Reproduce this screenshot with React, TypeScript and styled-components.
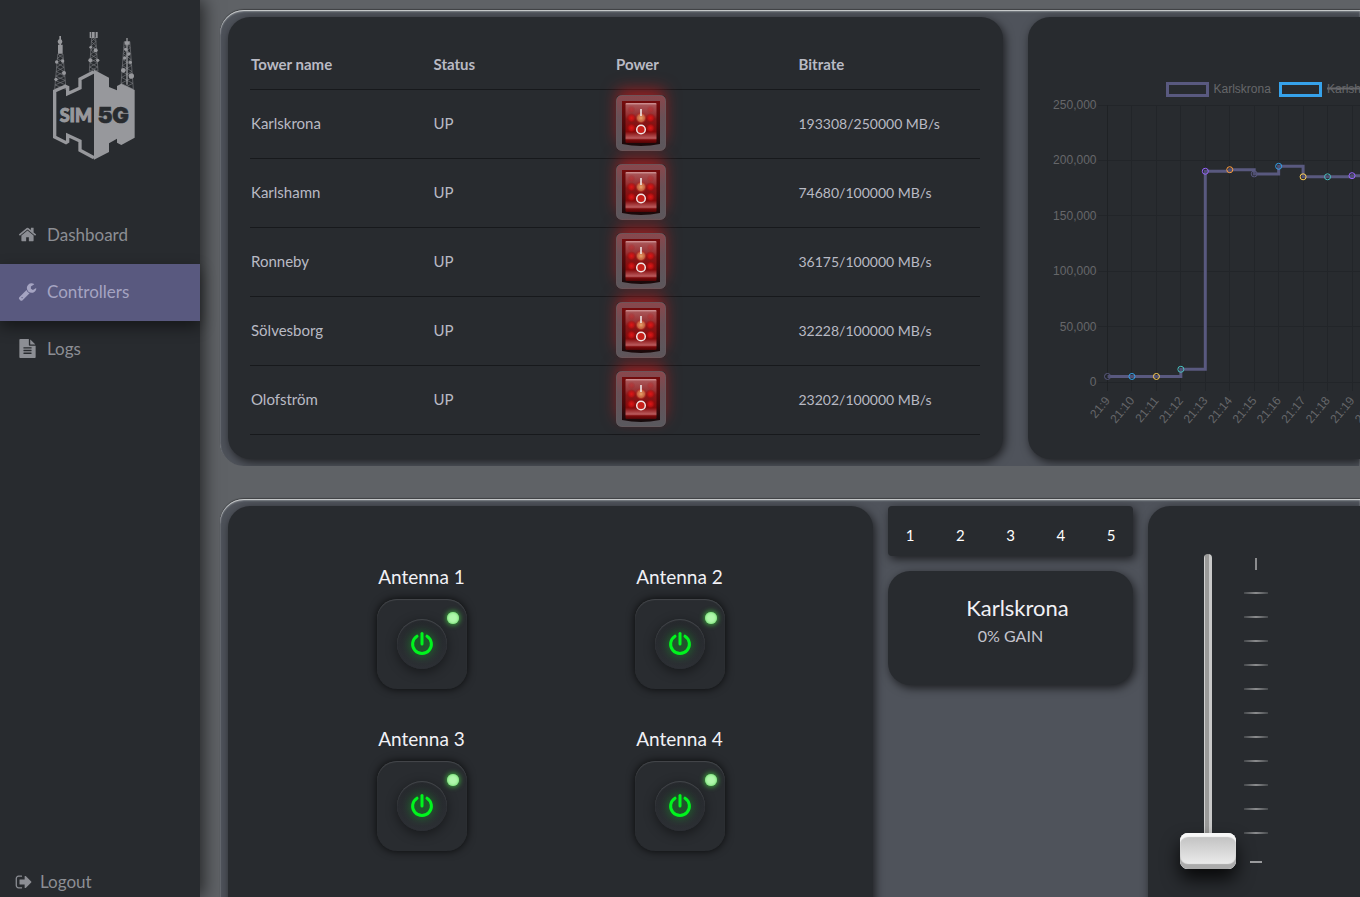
import React, { useState } from 'react';
import styled, { createGlobalStyle } from 'styled-components';

const GlobalStyle = createGlobalStyle`
  *, *::before, *::after { box-sizing: border-box; }
  body {
    margin: 0;
    background: #5f6266;
    color: #b9bac4;
    font-family: Lato, "Liberation Sans", sans-serif;
    font-size: 15px;
    overflow: hidden;
  }
  svg { display: block; }
  button { font: inherit; color: inherit; background: none; border: 0; padding: 0; cursor: pointer; }
`;

const Page = styled.div`
  display: flex;
  height: 100vh;
  overflow: hidden;
`;

const Sidebar = styled.aside`
  flex: 0 0 200px;
  display: flex;
  flex-direction: column;
  background: #282b2f;
  box-shadow: 4px 0 16px rgba(0, 0, 0, 0.6);
  z-index: 1;
`;

const Brand = styled.div`
  height: 207px;
  padding: 30px 50px 0;
`;

const NavLink = styled.a<{ $active?: boolean }>`
  display: flex;
  align-items: center;
  gap: 10px;
  height: 57px;
  padding: 0 18px 3px;
  font-size: 17px;
  text-decoration: none;
  color: ${(p) => (p.$active ? '#a5a4c2' : '#8c8e94')};
  background: ${(p) => (p.$active ? '#59597f' : 'transparent')};
  box-shadow: ${(p) => (p.$active ? '0 6px 14px rgba(0, 0, 0, 0.45)' : 'none')};
`;

const LogoutLink = styled.a`
  display: flex;
  align-items: center;
  gap: 7px;
  margin-top: auto;
  padding: 0 15px 4px;
  line-height: 22px;
  font-size: 17px;
  text-decoration: none;
  color: #8c8e94;
`;

const Main = styled.main`
  flex: 1;
  min-width: 0;
  display: flex;
  flex-direction: column;
  gap: 33px;
  padding: 10px 0 0 20px;
`;

const Panel = styled.section<{ $columns: string; $gap: number; $grow?: boolean }>`
  display: grid;
  grid-template-columns: ${(p) => p.$columns};
  gap: ${(p) => p.$gap}px;
  flex: ${(p) => (p.$grow ? '1 0 480px' : 'none')};
  padding: 7px 0 7px 8px;
  border-radius: 24px 0 0 24px;
  background: #4f535b;
  box-shadow: inset 0 1px 1px #d0d2d3, inset 0 2px 2px rgba(190, 195, 200, 0.35), 0 -1px 1px rgba(0, 0, 0, 0.35);
  overflow: hidden;
`;

const Card = styled.div<{ $small?: boolean }>`
  min-width: 0;
  border-radius: ${(p) => (p.$small ? '4px' : '22px')};
  background: #282b2f;
  box-shadow: 2px 3px 10px rgba(0, 0, 0, 0.65);
`;

const TableCard = styled(Card)`
  padding: 22px 23px 24px 22px;
`;

const EdgeCard = styled(Card)`
  border-radius: 22px 0 0 22px;
  overflow: hidden;
`;

const TowerTable = styled.table`
  width: 100%;
  table-layout: fixed;
  border-collapse: collapse;
`;

const HeadCell = styled.th`
  height: 50px;
  padding: 0 1px;
  text-align: left;
  font-weight: 700;
  border-bottom: 1px solid #17191c;
`;

const Cell = styled.td<{ $numeric?: boolean }>`
  height: 69px;
  padding: 0 1px 1px;
  font-size: ${(p) => (p.$numeric ? '14px' : '15px')};
  border-bottom: 1px solid #17191c;
`;

const SwitchLabel = styled.label`
  position: relative;
  display: block;
  width: 50px;
  height: 56px;
  border-radius: 5px;
  box-shadow: 0 -7px 16px -2px rgba(240, 20, 20, 0.6);
  cursor: pointer;
`;

const SwitchInput = styled.input`
  position: absolute;
  inset: 0;
  width: 100%;
  height: 100%;
  margin: 0;
  opacity: 0;
`;

const AntennaCard = styled(Card)`
  display: grid;
  grid-template-columns: 40% 40%;
  justify-content: center;
  align-content: start;
  row-gap: 35px;
  padding-top: 56px;
`;

const Antenna = styled.div`
  display: flex;
  flex-direction: column;
  align-items: center;
  gap: 7px;
`;

const AntennaName = styled.span`
  line-height: 30px;
  font-size: 19px;
  color: #f1f1f6;
`;

const PowerButton = styled.button`
  position: relative;
  display: grid;
  place-items: center;
  width: 90px;
  height: 90px;
  border-radius: 20px;
  background: #292c30;
  box-shadow: inset 0 1px 1px #45484c, 0 0 8px rgba(0, 0, 0, 0.8);
`;

const PowerKnob = styled.span`
  display: grid;
  place-items: center;
  width: 50px;
  height: 50px;
  border-radius: 50%;
  background: linear-gradient(#26292d, #2c2f34);
  box-shadow: inset 0 1px 1px #45484c, 0 3px 12px rgba(0, 0, 0, 0.45);
`;

const PowerIcon = styled.svg`
  width: 24px;
  height: 24px;
  overflow: visible;
  filter: drop-shadow(0 0 5px rgba(0, 255, 30, 0.6));
`;

const Led = styled.span<{ $on: boolean }>`
  position: absolute;
  top: 13px;
  right: 8px;
  width: 12px;
  height: 12px;
  border-radius: 50%;
  background: ${(p) => (p.$on ? '#b0f8ac' : '#44484c')};
  box-shadow: ${(p) => (p.$on ? '0 0 5px 1px #3ca83e, inset 0 0 3px #5fd35f' : 'none')};
`;

const SideColumn = styled.div`
  display: flex;
  flex-direction: column;
  gap: 15px;
`;

const Pager = styled(Card)`
  display: flex;
  justify-content: space-between;
  height: 50px;
  padding: 8px 16px 0;
  color: #ffffff;
`;

const PageButton = styled.button`
  width: 12px;
`;

const GainCard = styled(Card)`
  padding: 22px 0 36px;
  text-align: center;
`;

const GainTitle = styled.h2`
  margin: 0;
  padding-left: 14px;
  font-size: 22px;
  line-height: 30px;
  font-weight: 400;
  color: #f1f1f6;
`;

const GainValue = styled.p`
  margin: 0;
  font-size: 16px;
  line-height: 26px;
  color: #c4c5ce;
`;

const FaderCard = styled(EdgeCard)`
  display: flex;
  align-items: flex-start;
  gap: 8px;
  padding: 48px 0 0 32px;
`;

const Fader = styled.input`
  appearance: none;
  writing-mode: vertical-lr;
  direction: rtl;
  width: 56px;
  height: 315px;
  margin: 0;
  background: transparent;

  &::-webkit-slider-runnable-track {
    width: 8px;
    height: 315px;
    border-radius: 4px;
    background: linear-gradient(90deg, #d0d0d0 1px, #9a9a99 1px, #9a9a99 5px, #c9c9c9 5px);
  }

  &::-webkit-slider-thumb {
    appearance: none;
    width: 56px;
    height: 36px;
    margin-left: -24px;
    border-radius: 8px;
    background: linear-gradient(#bdbdbd, #f2f2f2);
    box-shadow: inset 0 5px 1px -1px #f7f7f7, inset 0 -5px 1px #ababab, inset 0 0 0 1px #dcdcdc, 0 10px 18px rgba(0, 0, 0, 0.8);
  }
`;

const Scale = styled.div`
  display: flex;
  flex-direction: column;
  align-items: center;
  width: 24px;
  padding-top: 4px;
`;

const ScaleTop = styled.span`
  width: 2px;
  height: 12px;
  margin-bottom: 22px;
  background: #8b8c8e;
`;

const ScaleTick = styled.span`
  width: 24px;
  height: 2px;
  margin-bottom: 22px;
  background: linear-gradient(90deg, #45484b, #8b8c8e 50%, #45484b);
`;

const ScaleBottom = styled.span`
  width: 12px;
  height: 2px;
  margin-top: 5px;
  background: #9a9b9d;
`;

const icons = {
  home: 'M1472 992v480q0 26-19 45t-45 19h-384v-384h-256v384h-384q-26 0-45-19t-19-45v-480q0-1 .5-3t.5-3l575-474 575 474q1 2 1 6zm223-69l-62 74q-8 9-21 11h-3q-13 0-21-7l-692-577-692 577q-12 8-24 7-13-2-21-11l-62-74q-8-10-7-23.5t11-21.5l719-599q32-26 76-26t76 26l244 204v-195q0-14 9-23t23-9h192q14 0 23 9t9 23v408l219 182q10 8 11 21.5t-7 23.5z',
  wrench: 'M448 1472q0-26-19-45t-45-19-45 19-19 45 19 45 45 19 45-19 19-45zm644-420l-682 682q-37 37-90 37-52 0-91-37l-106-108q-38-36-38-90 0-53 38-91l681-681q39 98 114.5 173.5t173.5 114.5zm634-435q0 39-23 106-47 134-164.5 217.5t-258.5 83.5q-185 0-316.5-131.5t-131.5-316.5 131.5-316.5 316.5-131.5q58 0 121.5 16.5t107.5 46.5q16 11 16 28t-16 28l-293 169v224l193 107q5-3 79-48.5t135.5-81 70.5-35.5q15 0 23.5 10t8.5 25z',
  file: 'M1596 476q14 14 28 36h-472v-472q22 14 36 28zm-476 164h544v1056q0 40-28 68t-68 28h-1344q-40 0-68-28t-28-68v-1600q0-40 28-68t68-28h800v544q0 40 28 68t68 28zm160 736v-64q0-14-9-23t-23-9h-704q-14 0-23 9t-9 23v64q0 14 9 23t23 9h704q14 0 23-9t9-23zm0-256v-64q0-14-9-23t-23-9h-704q-14 0-23 9t-9 23v64q0 14 9 23t23 9h704q14 0 23-9t9-23zm0-256v-64q0-14-9-23t-23-9h-704q-14 0-23 9t-9 23v64q0 14 9 23t23 9h704q14 0 23-9t9-23z',
  signOut: 'M704 1440q0 4 1 20t.5 26.5-3 23.5-10 19.5-20.5 6.5h-320q-119 0-203.5-84.5t-84.5-203.5v-704q0-119 84.5-203.5t203.5-84.5h320q13 0 22.5 9.5t9.5 22.5q0 4 1 20t.5 26.5-3 23.5-10 19.5-20.5 6.5h-320q-66 0-113 47t-47 113v704q0 66 47 113t113 47h312l11.5 1 11.5 3 8 5.5 7 9 2 13.5zm928-544q0 26-19 45l-544 544q-19 19-45 19t-45-19-19-45v-288h-448q-26 0-45-19t-19-45v-384q0-26 19-45t45-19h448v-288q0-26 19-45t45-19 45 19l544 544q19 19 19 45z',
};

function Icon({ name, size }: { name: keyof typeof icons; size: number }) {
  return (
    <svg width={size} height={size} viewBox="0 0 1792 1792" fill="currentColor" aria-hidden="true">
      <path d={icons[name]} />
    </svg>
  );
}

function Mast({ x, top, base, half }: { x: number; top: number; base: number; half: number }) {
  const steps = 8;
  const height = (base - top) / steps;
  const at = (i: number) => half * (0.45 + (0.55 * i) / steps);
  let d = `M${x - at(0)} ${top}L${x - half} ${base}M${x + at(0)} ${top}L${x + half} ${base}`;
  for (let i = 0; i < steps; i++) {
    const y = top + i * height;
    d += `M${x - at(i)} ${y}L${x + at(i + 1)} ${y + height}M${x + at(i)} ${y}L${x - at(i + 1)} ${y + height}`;
  }
  return <path d={d} fill="none" stroke="#77797d" strokeWidth="2" />;
}

function Logo() {
  return (
    <svg width="90" height="133" viewBox="150 90 270 399" role="img" aria-label="SIM 5G">
      <Mast x={181} top={162} base={268} half={17} />
      <Mast x={281} top={112} base={214} half={13} />
      <Mast x={381} top={125} base={268} half={19} />
      <g fill="#97989c">
        <path d="M178 108h5v26h5v27h-14v-27h4zM269 96h5v18h-5zM276 96h8v18h-8zM287 96h6v18h-6zM379 114h4v140h-4zM374 124h15v10h-15z" />
        <circle cx="180" cy="125" r="7" />
        <circle cx="170" cy="186" r="5" />
        <circle cx="188" cy="183" r="5" />
        <circle cx="192" cy="219" r="6" />
        <circle cx="168" cy="238" r="5" />
        <circle cx="287" cy="151" r="6" />
        <circle cx="271" cy="181" r="6" />
        <circle cx="293" cy="181" r="5" />
        <circle cx="272" cy="142" r="4" />
        <circle cx="377" cy="148" r="5" />
        <circle cx="386" cy="162" r="5" />
        <circle cx="374" cy="174" r="5" />
        <circle cx="391" cy="187" r="5" />
        <circle cx="370" cy="211" r="7" />
        <circle cx="394" cy="228" r="8" />
        <path d="M282 209L327 233V261L351 271V258L364 251L404 270V413L364 435L351 428V416L327 430V456L282 479Z" />
      </g>
      <path
        d="M282 215L240 237V264L203 281V262L196 259L164 273V411L198 428L203 425V406L240 423V451L282 473"
        fill="none"
        stroke="#97989c"
        strokeWidth="10"
      />
      <text x="179" y="367" fill="#97989c" stroke="#97989c" strokeWidth="3" fontFamily="Lato" fontWeight="900" fontSize="54">SIM</text>
      <text x="293" y="370" fill="#282b2f" stroke="#282b2f" strokeWidth="2" fontFamily="Inter" fontWeight="900" fontSize="66">5G</text>
    </svg>
  );
}

function RockerSwitch({ tower }: { tower: string }) {
  return (
    <SwitchLabel>
      <SwitchInput type="checkbox" defaultChecked aria-label={`${tower} power`} />
      <svg width="50" height="56" viewBox="0 0 50 56" aria-hidden="true">
        <defs>
          <linearGradient id="plate" x1="0" y1="0" x2="0" y2="1">
            <stop offset="0" stopColor="#8a474c" />
            <stop offset="0.4" stopColor="#695056" />
            <stop offset="1" stopColor="#59595e" />
          </linearGradient>
          <linearGradient id="well" x1="0" y1="0" x2="0" y2="1">
            <stop offset="0" stopColor="#750c0d" />
            <stop offset="0.6" stopColor="#4a090a" />
            <stop offset="1" stopColor="#140a0b" />
          </linearGradient>
          <linearGradient id="rocker" x1="0" y1="0" x2="0" y2="1">
            <stop offset="0" stopColor="#d39a9b" />
            <stop offset="0.06" stopColor="#a85355" />
            <stop offset="0.3" stopColor="#963032" />
            <stop offset="0.4" stopColor="#86191a" />
            <stop offset="0.72" stopColor="#840a0b" />
            <stop offset="0.88" stopColor="#bb5c5e" />
            <stop offset="0.92" stopColor="#7d0b0c" />
            <stop offset="1" stopColor="#4f0506" />
          </linearGradient>
          <radialGradient id="lamp">
            <stop offset="0" stopColor="#e01616" />
            <stop offset="0.5" stopColor="#c41213" stopOpacity="0.8" />
            <stop offset="1" stopColor="#a00000" stopOpacity="0" />
          </radialGradient>
          <radialGradient id="hotLamp">
            <stop offset="0" stopColor="#e8a468" />
            <stop offset="0.6" stopColor="#d4744a" stopOpacity="0.8" />
            <stop offset="1" stopColor="#b00000" stopOpacity="0" />
          </radialGradient>
        </defs>
        <rect x="0.5" y="0.5" width="49" height="55" rx="5" fill="url(#plate)" stroke="#857074" strokeOpacity="0.5" />
        <path d="M6 6H44V49Q25 53 6 49Z" fill="url(#well)" />
        <rect x="9.500" y="8" width="31" height="40" rx="1" fill="url(#rocker)" />
        {[15.5, 34.5].map((x) => (
          <g key={x} fill="url(#lamp)">
            <circle cx={x} cy="14.500" r="4" opacity="0.3" />
            <circle cx={x} cy="23" r="5" />
            <circle cx={x} cy="33" r="5" />
          </g>
        ))}
        <circle cx="25" cy="23" r="6" fill="url(#hotLamp)" />
        <circle cx="25" cy="34" r="4" fill="#c8201a" />
        <path d="M25 14V21" stroke="#eee6e6" strokeWidth="1.600" />
        <circle cx="25" cy="34.500" r="4.300" fill="none" stroke="#f1e6e6" strokeWidth="1.500" />
      </svg>
    </SwitchLabel>
  );
}

const times = ['21:9', '21:10', '21:11', '21:12', '21:13', '21:14', '21:15', '21:16', '21:17', '21:18', '21:19', '21:20'];
const values = [5000, 5000, 5000, 11500, 190200, 191600, 187800, 194700, 185200, 185200, 186200, 186200];
const dots = ['#59597f', '#36a2eb', '#ffce56', '#4bc0c0', '#9966ff', '#ff9f40', '#59597f', '#36a2eb', '#ffce56', '#4bc0c0', '#9966ff', '#ff9f40'];

function BitrateChart() {
  const xAt = (i: number) => 79.5 + i * 24.45;
  const yAt = (v: number) => 365 - (v * 277) / 250000;
  const line = values.reduce((d, v, i) => (i === 0 ? `M${xAt(0)} ${yAt(v)}` : `${d}H${xAt(i)}V${yAt(v)}`), '');
  return (
    <svg width="332" height="440" viewBox="0 0 332 440" fontFamily="Liberation Sans, sans-serif" fontSize="12" fill="#66676a">
      <g fill="none" strokeWidth="3">
        <rect x="139.500" y="66.500" width="40" height="12" stroke="#59597f" />
        <rect x="252.500" y="66.500" width="40" height="12" stroke="#36a2eb" />
      </g>
      <text x="185.500" y="76">Karlskrona</text>
      <text x="299" y="76">Karlshamn</text>
      <path d="M299 71.500H357" stroke="#66676a" strokeWidth="2" />
      {[0, 50000, 100000, 150000, 200000, 250000].map((v) => (
        <g key={v}>
          <path d={`M70 ${Math.floor(yAt(v)) + 0.5}H332`} stroke="#222529" />
          <text x="68.500" y={yAt(v) + 4} textAnchor="end">{v.toLocaleString('en-US')}</text>
        </g>
      ))}
      {times.map((t, i) => (
        <g key={t}>
          <path d={`M${Math.floor(xAt(i)) + 0.5} 88V374`} stroke={i === 0 ? '#1f2225' : '#222529'} />
          <text textAnchor="end" transform={`translate(${xAt(i) + 3} 384) rotate(-50)`}>{t}</text>
        </g>
      ))}
      <path d={line} fill="none" stroke="#59597f" strokeWidth="3" />
      {values.map((v, i) => (
        <circle key={i} cx={xAt(i)} cy={yAt(v)} r="3" fill="#000000" fillOpacity="0.1" stroke={dots[i]} />
      ))}
    </svg>
  );
}

const towers = [
  { name: 'Karlskrona', bitrate: '193308/250000 MB/s' },
  { name: 'Karlshamn', bitrate: '74680/100000 MB/s' },
  { name: 'Ronneby', bitrate: '36175/100000 MB/s' },
  { name: 'Sölvesborg', bitrate: '32228/100000 MB/s' },
  { name: 'Olofström', bitrate: '23202/100000 MB/s' },
];

function AntennaControl({ index }: { index: number }) {
  const [on, setOn] = useState(true);
  return (
    <Antenna>
      <AntennaName id={`antenna-${index}`}>Antenna {index}</AntennaName>
      <PowerButton type="button" aria-pressed={on} aria-labelledby={`antenna-${index}`} onClick={() => setOn(!on)}>
        <PowerKnob>
          <PowerIcon viewBox="0 0 24 24" fill="none" stroke={on ? '#00f51e' : '#6a6d70'} strokeWidth="3" strokeLinecap="round">
            <path d="M12 1.500V12" />
            <path d="M7 4.200A9.400 9.400 0 1 0 17 4.200" />
          </PowerIcon>
        </PowerKnob>
        <Led $on={on} />
      </PowerButton>
    </Antenna>
  );
}

export default function App() {
  const [gain, setGain] = useState(0);
  const [selected, setSelected] = useState(0);
  return (
    <Page>
      <GlobalStyle />
      <Sidebar>
        <Brand>
          <Logo />
        </Brand>
        <nav>
          <NavLink href="#dashboard"><Icon name="home" size={19} />Dashboard</NavLink>
          <NavLink href="#controllers" $active aria-current="page"><Icon name="wrench" size={19} />Controllers</NavLink>
          <NavLink href="#logs"><Icon name="file" size={19} />Logs</NavLink>
        </nav>
        <LogoutLink href="#logout"><Icon name="signOut" size={18} />Logout</LogoutLink>
      </Sidebar>
      <Main>
        <Panel $columns="minmax(0, 1fr) 332px" $gap={25}>
          <TableCard>
            <TowerTable>
              <thead>
                <tr>
                  <HeadCell>Tower name</HeadCell>
                  <HeadCell>Status</HeadCell>
                  <HeadCell>Power</HeadCell>
                  <HeadCell>Bitrate</HeadCell>
                </tr>
              </thead>
              <tbody>
                {towers.map((tower) => (
                  <tr key={tower.name}>
                    <Cell>{tower.name}</Cell>
                    <Cell>UP</Cell>
                    <Cell><RockerSwitch tower={tower.name} /></Cell>
                    <Cell $numeric>{tower.bitrate}</Cell>
                  </tr>
                ))}
              </tbody>
            </TowerTable>
          </TableCard>
          <EdgeCard>
            <BitrateChart />
          </EdgeCard>
        </Panel>
        <Panel $columns="minmax(0, 1fr) 245px 212px" $gap={15} $grow>
          <AntennaCard>
            {[1, 2, 3, 4].map((n) => (
              <AntennaControl key={n} index={n} />
            ))}
          </AntennaCard>
          <SideColumn>
            <Pager $small>
              {towers.map((tower, i) => (
                <PageButton key={tower.name} type="button" aria-label={`${i + 1}`} onClick={() => setSelected(i)}>{i + 1}</PageButton>
              ))}
            </Pager>
            <GainCard>
              <GainTitle>{towers[selected].name}</GainTitle>
              <GainValue>{gain}% GAIN</GainValue>
            </GainCard>
          </SideColumn>
          <FaderCard>
            <Fader type="range" min={0} max={100} value={gain} aria-label="Gain" onChange={(e) => setGain(Number(e.target.value))} />
            <Scale>
              <ScaleTop />
              {Array.from({ length: 11 }, (_, i) => (
                <ScaleTick key={i} />
              ))}
              <ScaleBottom />
            </Scale>
          </FaderCard>
        </Panel>
      </Main>
    </Page>
  );
}
